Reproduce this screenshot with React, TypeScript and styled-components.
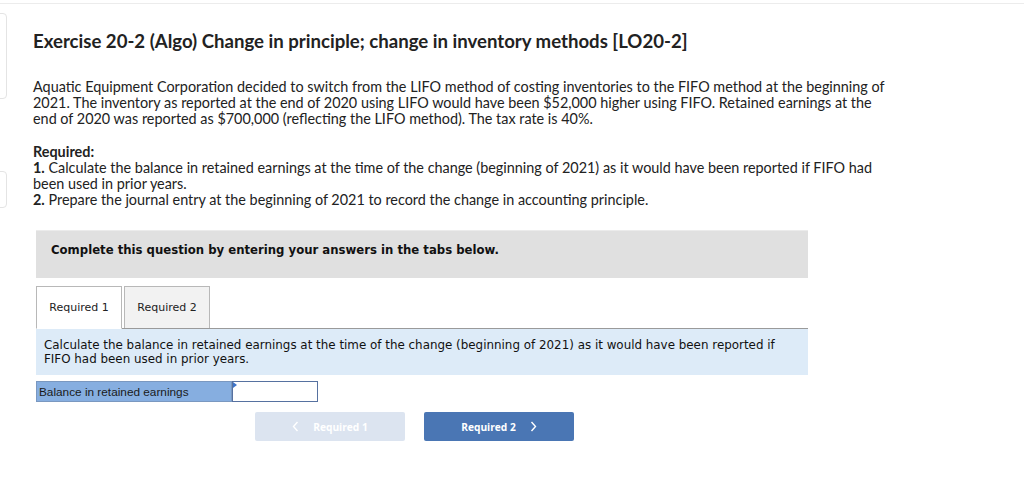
import styled, { createGlobalStyle } from "styled-components";

const GlobalStyle = createGlobalStyle`
  body {
    margin: 0;
    background: #fff;
    font-family: "Open Sans", "Liberation Sans", sans-serif;
    color: #222;
  }
`;

const TopRule = styled.div`
  height: 3px;
  border-bottom: 1px solid #ececec;
`;

const Page = styled.div`
  display: flex;
  height: 475px;
`;

const Rail = styled.div`
  width: 33px;
  flex-shrink: 0;
  display: flex;
  flex-direction: column;
  padding-top: 9px;
`;

const SideCard = styled.div<{ $h: number; $gap: number }>`
  width: 12px;
  height: ${p => p.$h}px;
  margin-top: ${p => p.$gap}px;
  margin-left: -7px;
  border: 1px solid #e4e4e4;
  border-radius: 4px;
`;

const Content = styled.div`
  width: 900px;
  display: flex;
  flex-direction: column;
`;

const Title = styled.h1`
  margin: 25px 0 0;
  font-family: "Lato", "Open Sans", sans-serif;
  font-size: 18.6px;
  font-weight: 700;
  line-height: 24px;
  color: #222;
  white-space: nowrap;
`;

const Para = styled.p`
  margin: 0;
  font-family: "Lato", "Open Sans", sans-serif;
  font-size: 14.4px;
  line-height: 16px;
  color: #222;
  white-space: nowrap;
`;

const Intro = styled(Para)`
  margin-top: 26px;
`;

const Required = styled(Para)`
  margin-top: 17px;
  b {
    font-weight: 700;
  }
`;

const Panel = styled.div`
  margin: 22px 0 0 3px;
  width: 772px;
  font-family: "DejaVu Sans", Verdana, sans-serif;
`;

const Banner = styled.div`
  box-sizing: border-box;
  height: 48px;
  background: #e0e0e0;
  border-top: 1px solid #ebebeb;
  padding: 11px 0 0 15px;
  font-size: 11.7px;
  line-height: 16px;
  font-weight: 700;
  color: #111;
`;

const Tabs = styled.div`
  margin-top: 8px;
  display: flex;
  gap: 2px;
  border-bottom: 1px solid #9a9a9a;
`;

const Tab = styled.div<{ $active?: boolean }>`
  width: 84px;
  height: 41px;
  margin-bottom: ${p => (p.$active ? "-1px" : "0")};
  box-sizing: content-box;
  border: 1px solid #b8b8b8;
  border-bottom: ${p => (p.$active ? "1px solid #fff" : "none")};
  background: ${p => (p.$active ? "#fff" : "#f2f2f2")};
  display: flex;
  align-items: center;
  justify-content: center;
  font-size: 11px;
  color: #222;
`;

const Prompt = styled.div`
  box-sizing: border-box;
  height: 46px;
  background: #ddebf8;
  padding: 9px 8px 0;
  font-size: 11.9px;
  line-height: 14px;
  color: #111;
`;

const AnswerRow = styled.div`
  margin-top: 6px;
  display: flex;
  height: 21px;
`;

const AnswerLabel = styled.div`
  box-sizing: border-box;
  width: 196px;
  background: #86aee0;
  border: 1px solid #7a98c0;
  display: flex;
  align-items: center;
  padding-left: 2px;
  font-family: "Liberation Sans", Arial, sans-serif;
  font-size: 11.8px;
  color: #1a1a1a;
`;

const AnswerInput = styled.div`
  position: relative;
  box-sizing: border-box;
  width: 86px;
  border: 1px solid #5671a0;
  background: #fff;
`;

const Marker = styled.span`
  position: absolute;
  left: 0;
  top: 0;
  width: 0;
  height: 0;
  border-top: 3px solid transparent;
  border-bottom: 3px solid transparent;
  border-left: 4px solid #3e74c9;
`;

const Nav = styled.div`
  margin: 10px 0 0 219px;
  display: flex;
  gap: 19px;
`;

const NavButton = styled.div<{ $disabled?: boolean }>`
  width: 150px;
  height: 29px;
  border-radius: 2px;
  background: ${p => (p.$disabled ? "#dce4f0" : "#4a76b4")};
  color: #fff;
  display: flex;
  align-items: center;
  justify-content: center;
  gap: 14px;
  font-family: "Open Sans", "Liberation Sans", sans-serif;
  font-size: 10.2px;
  font-weight: 700;
`;

const Chevron = ({ dir }: { dir: "left" | "right" }) => (
  <svg width="7" height="11" viewBox="0 0 7 11">
    <path
      d={dir === "left" ? "M5.5 1 L1.5 5.5 L5.5 10" : "M1.5 1 L5.5 5.5 L1.5 10"}
      fill="none"
      stroke="#fff"
      strokeWidth="1.4"
    />
  </svg>
);

export default function App() {
  return (
    <>
      <GlobalStyle />
      <TopRule />
      <Page>
        <Rail>
          <SideCard $h={84} $gap={0} />
          <SideCard $h={35} $gap={72} />
        </Rail>
        <Content>
          <Title>Exercise 20-2 (Algo) Change in principle; change in inventory methods [LO20-2]</Title>
          <Intro>
            Aquatic Equipment Corporation decided to switch from the LIFO method of costing inventories to the FIFO
            method at the beginning of
            <br />
            2021. The inventory as reported at the end of 2020 using LIFO would have been $52,000 higher using FIFO.
            Retained earnings at the
            <br />
            end of 2020 was reported as $700,000 (reflecting the LIFO method). The tax rate is 40%.
          </Intro>
          <Required>
            <b>Required:</b>
            <br />
            <b>1.</b> Calculate the balance in retained earnings at the time of the change (beginning of 2021) as it
            would have been reported if FIFO had
            <br />
            been used in prior years.
            <br />
            <b>2.</b> Prepare the journal entry at the beginning of 2021 to record the change in accounting principle.
          </Required>
          <Panel>
            <Banner>Complete this question by entering your answers in the tabs below.</Banner>
            <Tabs>
              <Tab $active>Required 1</Tab>
              <Tab>Required 2</Tab>
            </Tabs>
            <Prompt>
              Calculate the balance in retained earnings at the time of the change (beginning of 2021) as it would
              have been reported if
              <br />
              FIFO had been used in prior years.
            </Prompt>
            <AnswerRow>
              <AnswerLabel>Balance in retained earnings</AnswerLabel>
              <AnswerInput>
                <Marker />
              </AnswerInput>
            </AnswerRow>
            <Nav>
              <NavButton $disabled>
                <Chevron dir="left" />
                Required 1
              </NavButton>
              <NavButton>
                Required 2
                <Chevron dir="right" />
              </NavButton>
            </Nav>
          </Panel>
        </Content>
      </Page>
    </>
  );
}
